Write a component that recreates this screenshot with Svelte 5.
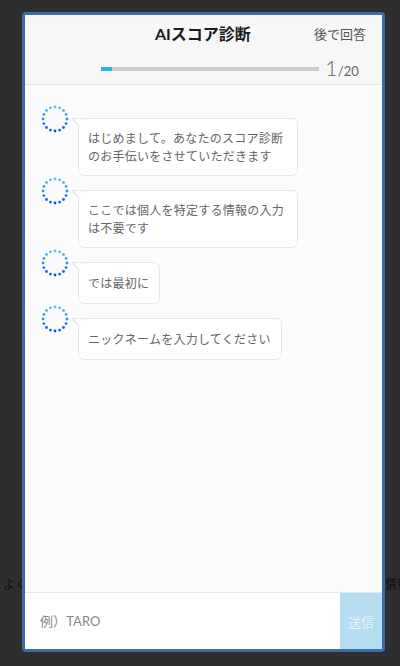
<script>
	const messages = [
		'はじめまして。あなたのスコア診断のお手伝いをさせていただきます',
		'ここでは個人を特定する情報の入力は不要です',
		'では最初に',
		'ニックネームを入力してください'
	];

	// dotted spinner: pale at the top, saturated at the bottom
	const dots = Array.from({ length: 16 }, (_, i) => {
		const a = (i / 16) * Math.PI * 2;
		const t = (1 - Math.cos(a)) / 2;
		return {
			x: 14 + 12 * Math.sin(a),
			y: 14 - 12 * Math.cos(a),
			fill: `rgb(${Math.round(100 - 90 * t)}, ${Math.round(190 - 110 * t)}, ${Math.round(240 + 10 * t)})`
		};
	});
</script>

<div class="page">
	<div class="behind">
		<span>よく</span>
		<span>情報</span>
	</div>

	<div class="modal">
		<header>
			<div class="top">
				<h1>AIスコア診断</h1>
				<span class="later">後で回答</span>
			</div>
			<div class="progress">
				<div class="bar"><div class="fill" style="width: 5%"></div></div>
				<div class="count"><b>1</b>/20</div>
			</div>
		</header>

		<div class="chat">
			{#each messages as text}
				<div class="row">
					<svg class="avatar" width="28" height="28" viewBox="0 0 28 28">
						{#each dots as d}
							<circle cx={d.x} cy={d.y} r="1.4" fill={d.fill} />
						{/each}
					</svg>
					<div class="bubble">{text}</div>
				</div>
			{/each}
		</div>

		<div class="composer">
			<div class="field">例）TARO</div>
			<button>送信</button>
		</div>
	</div>
</div>

<style>
	:global(body) {
		margin: 0;
		background: #2e2e2e;
	}

	.page {
		position: relative;
		height: 666px;
		overflow: hidden;
		font-family: Lato, 'Noto Sans CJK JP', sans-serif;
	}

	.behind {
		display: flex;
		justify-content: space-between;
		margin-right: -9px;
		padding: 576px 0 0 3px;
		font-size: 12px;
		line-height: 18px;
		color: #111;
	}

	.modal {
		position: absolute;
		left: 22px;
		top: 12px;
		width: 357px;
		height: 634px;
		display: flex;
		flex-direction: column;
		border: 3px solid #3b6ca6;
		border-radius: 4px;
		background: #fcfcfc;
	}

	header {
		height: 69px;
		flex: none;
		background: #f7f7f7;
		border-bottom: 1px solid #e4e9ee;
	}

	.top {
		display: flex;
		justify-content: space-between;
		align-items: center;
		padding: 8px 16px 0 130px;
		height: 20px;
	}

	h1 {
		margin: 0;
		font-size: 16px;
		font-weight: 700;
		color: #1c1c1c;
	}

	.later {
		font-size: 13px;
		color: #555;
	}

	.progress {
		display: flex;
		align-items: center;
		gap: 6px;
		margin: 12px 0 0 76px;
	}

	.bar {
		width: 218px;
		height: 4px;
		margin-top: -2px;
		background: #cccccc;
	}

	.fill {
		height: 100%;
		background: #2fb0e3;
	}

	.count {
		font-size: 13px;
		line-height: 26px;
		color: #666;
	}

	.count b {
		font-size: 22px;
		font-weight: 300;
	}

	.chat {
		flex: 1;
		padding: 20px 0 0 16px;
	}

	.row {
		display: flex;
		align-items: flex-start;
		margin-bottom: 1px;
	}

	.avatar {
		flex: none;
		margin-right: 9px;
	}

	.bubble {
		position: relative;
		box-sizing: border-box;
		max-width: 220px;
		min-height: 42px;
		display: flex;
		align-items: center;
		margin-top: 13px;
		padding: 11px 10px 9px 9px;
		background: #fff;
		border: 1px solid #e4e9ee;
		border-radius: 6px;
		font-size: 12px;
		letter-spacing: 0.25px;
		line-height: 18px;
		color: #666;
	}

	.bubble::before {
		content: '';
		position: absolute;
		box-sizing: border-box;
		left: -7px;
		top: -1px;
		width: 8px;
		height: 8px;
		border-top: 1px solid #e4e9ee;
		background: linear-gradient(to top right, transparent 44%, #e4e9ee 44%, #e4e9ee 56%, #fff 56%);
	}

	.composer {
		height: 56px;
		flex: none;
		display: flex;
		background: #fff;
		border-top: 1px solid #e4e9ee;
	}

	.field {
		flex: 1;
		padding-left: 15px;
		font-size: 13px;
		letter-spacing: 0.1px;
		line-height: 56px;
		color: #888;
	}

	button {
		width: 42px;
		padding: 0;
		border: none;
		background: #b5dcf0;
		color: #e3f3fb;
		font: inherit;
		font-size: 13px;
	}
</style>
